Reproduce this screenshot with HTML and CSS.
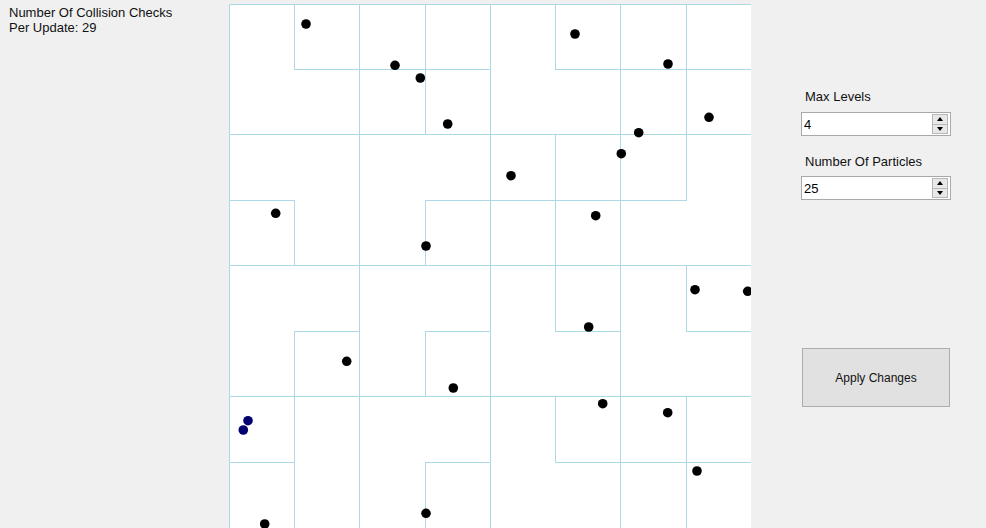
FILE: index.html
```html
<!DOCTYPE html>
<html>
<head>
<meta charset="utf-8">
<link rel="stylesheet" href="styles.css">
</head>
<body>
<div class="app">
  <div class="stats">Number Of Collision Checks<br>Per Update: 29</div>
  <div class="canvas">
    <svg width="522" height="524" viewBox="0 0 522 524" xmlns="http://www.w3.org/2000/svg">
      <rect x="0" y="0" width="522" height="524" fill="#ffffff"/>
      <path class="grid" d="
        M0.5 0 V525 M65.5 0 V66 M130.5 0 V525 M196.5 0 V131
        M65.5 196 V262 M196.5 196 V262 M261.5 0 V525 M326.5 0 V66
        M391.5 0 V525 M457.5 0 V197 M326.5 130 V262
        M65.5 327 V393 M196.5 327 V393 M65.5 392 V525 M196.5 458 V525
        M326.5 261 V328 M457.5 261 V328 M326.5 392 V459 M457.5 392 V525
        M0 0.5 H522
        M65 65.5 H262 M326 65.5 H522
        M0 130.5 H522
        M0 196.5 H66 M196 196.5 H458
        M0 261.5 H522
        M65 327.5 H131 M196 327.5 H262 M326 327.5 H392 M457 327.5 H522
        M0 392.5 H522
        M0 458.5 H66 M196 458.5 H262 M326 458.5 H522"/>
      <g class="dots">
        <circle cx="77" cy="20" r="4.8"/>
        <circle cx="166" cy="61.3" r="4.8"/>
        <circle cx="191.3" cy="74" r="4.8"/>
        <circle cx="218.7" cy="120" r="4.8"/>
        <circle cx="46.7" cy="209.3" r="4.8"/>
        <circle cx="197" cy="242" r="4.8"/>
        <circle cx="346" cy="30" r="4.8"/>
        <circle cx="439" cy="60" r="4.8"/>
        <circle cx="480" cy="113.3" r="4.8"/>
        <circle cx="409.7" cy="128.7" r="4.8"/>
        <circle cx="392.3" cy="149.7" r="4.8"/>
        <circle cx="282" cy="171.7" r="4.8"/>
        <circle cx="366.7" cy="211.7" r="4.8"/>
        <circle cx="117.7" cy="357.3" r="4.8"/>
        <circle cx="224.3" cy="384" r="4.8"/>
        <circle cx="35.7" cy="520" r="4.8"/>
        <circle cx="197" cy="509.3" r="4.8"/>
        <circle cx="466" cy="285.7" r="4.8"/>
        <circle cx="518.7" cy="287.3" r="4.8"/>
        <circle cx="359.7" cy="323" r="4.8"/>
        <circle cx="373.7" cy="399.7" r="4.8"/>
        <circle cx="438.7" cy="408.7" r="4.8"/>
        <circle cx="468" cy="467" r="4.8"/>
      </g>
      <g class="dots-hit">
        <circle cx="19" cy="416.7" r="4.8"/>
        <circle cx="14.3" cy="426" r="4.8"/>
      </g>
    </svg>
  </div>
  <div class="controls">
    <div class="label first">Max Levels</div>
    <div class="updown">
      <span class="value">4</span>
      <div class="spin">
        <div class="spin-btn"><span class="arrow-up"></span></div>
        <div class="spin-btn"><span class="arrow-down"></span></div>
      </div>
    </div>
    <div class="label second">Number Of Particles</div>
    <div class="updown">
      <span class="value">25</span>
      <div class="spin">
        <div class="spin-btn"><span class="arrow-up"></span></div>
        <div class="spin-btn"><span class="arrow-down"></span></div>
      </div>
    </div>
    <div class="apply">Apply Changes</div>
  </div>
</div>
</body>
</html>
```
FILE: styles.css
```css
html, body {
  margin: 0;
  padding: 0;
}
body {
  width: 986px;
  height: 528px;
  overflow: hidden;
  background: #f0f0f0;
  font-family: "Liberation Sans", Arial, sans-serif;
  font-size: 13px;
  color: #000;
}
.app {
  display: flex;
  align-items: flex-start;
  height: 528px;
}
.stats {
  width: 220px;
  padding: 5px 0 0 9px;
  line-height: 15px;
  color: #111;
}
.canvas {
  margin-top: 4px;
  width: 522px;
  height: 524px;
  overflow: hidden;
}
.canvas svg {
  display: block;
}
.grid {
  fill: none;
  stroke: #add8e6;
  stroke-width: 1;
  shape-rendering: crispEdges;
}
.dots circle {
  fill: #000;
}
.dots-hit circle {
  fill: #000070;
}
.controls {
  margin-left: 50px;
  display: flex;
  flex-direction: column;
  align-items: flex-start;
}
.label {
  padding-left: 4px;
  line-height: 15px;
  color: #111;
}
.label.first {
  margin-top: 89px;
}
.label.second {
  margin-top: 18px;
}
.updown {
  margin-top: 8px;
  width: 150px;
  height: 24px;
  box-sizing: border-box;
  border: 1px solid #a9a9a9;
  background: #fff;
  display: flex;
  align-items: center;
  justify-content: space-between;
  padding: 0 2px 0 2px;
}
.label.second + .updown {
  margin-top: 7px;
}
.value {
  line-height: 15px;
  padding-top: 1px;
}
.spin {
  width: 16px;
  height: 20px;
  display: flex;
  flex-direction: column;
  border: 1px solid #b8b8b8;
  box-sizing: border-box;
  background: #e8e8e8;
}
.spin-btn {
  flex: 1;
  display: flex;
  align-items: center;
  justify-content: center;
}
.spin-btn + .spin-btn {
  border-top: 1px solid #b8b8b8;
}
.arrow-up {
  width: 0;
  height: 0;
  border-left: 3.5px solid transparent;
  border-right: 3.5px solid transparent;
  border-bottom: 4px solid #000;
}
.arrow-down {
  width: 0;
  height: 0;
  border-left: 3.5px solid transparent;
  border-right: 3.5px solid transparent;
  border-top: 4px solid #000;
}
.apply {
  margin-top: 148px;
  margin-left: 1px;
  width: 148px;
  height: 59px;
  box-sizing: border-box;
  border: 1px solid #adadad;
  background: #e1e1e1;
  display: flex;
  align-items: center;
  justify-content: center;
  font-size: 12px;
  color: #111;
}
```
